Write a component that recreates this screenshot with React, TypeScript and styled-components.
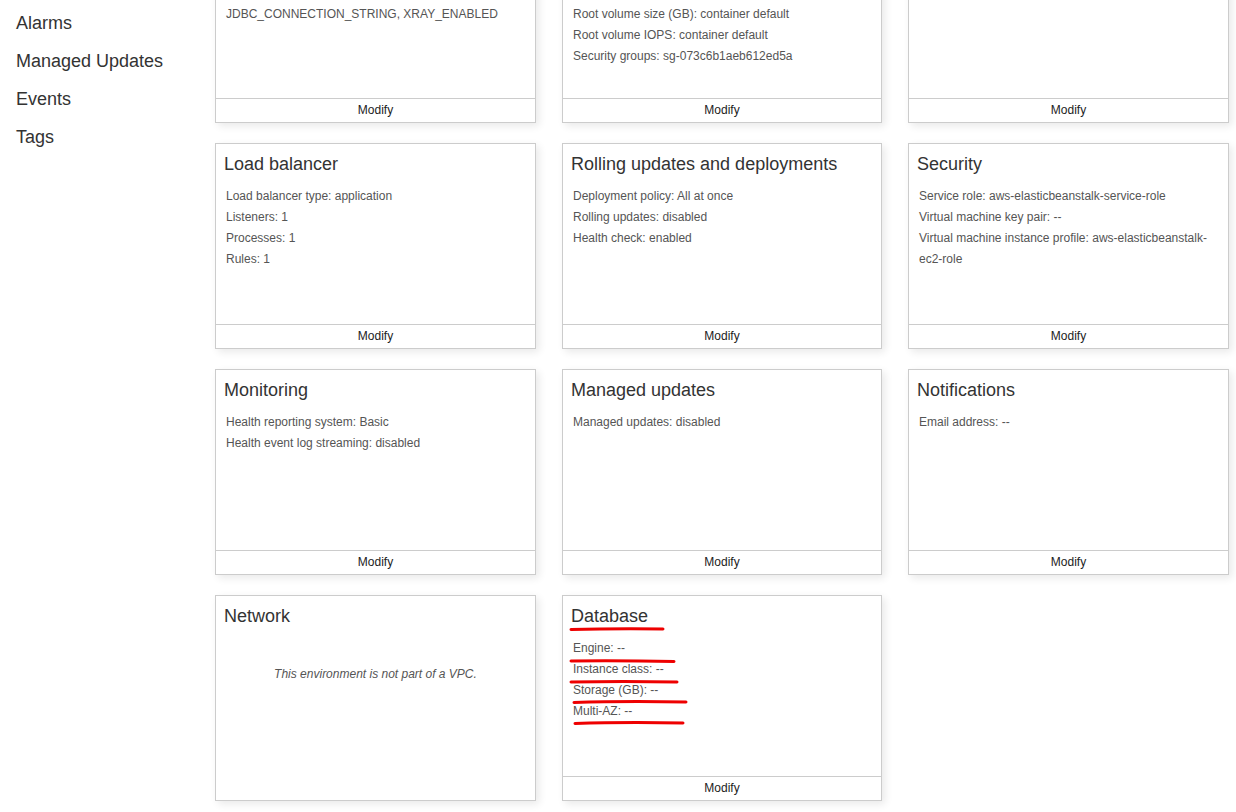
import React from "react";
import styled, { createGlobalStyle } from "styled-components";

const GlobalStyle = createGlobalStyle`
  html, body {
    margin: 0;
    padding: 0;
    background: #ffffff;
    font-family: "Liberation Sans", Arial, sans-serif;
    overflow: hidden;
  }
`;

const Page = styled.div`
  display: flex;
  align-items: flex-start;
  width: 1236px;
  height: 812px;
  overflow: hidden;
`;

const Sidebar = styled.nav`
  width: 215px;
  flex: none;
  padding-top: 4px;
  display: flex;
  flex-direction: column;
`;

const NavItem = styled.a`
  display: block;
  padding-left: 16px;
  height: 38px;
  line-height: 38px;
  font-size: 18px;
  color: #333333;
  text-decoration: none;
`;

/* the view is scrolled: the first row of cards starts above the viewport */
const Main = styled.main`
  margin-top: -83px;
  display: grid;
  grid-template-columns: 321px 320px 321px;
  grid-auto-rows: 206px;
  column-gap: 26px;
  row-gap: 20px;
`;

const Card = styled.section`
  position: relative;
  box-sizing: border-box;
  display: flex;
  flex-direction: column;
  border: 1px solid #cccccc;
  background: #ffffff;
  box-shadow: 3px 3px 8px rgba(0, 0, 0, 0.09);
`;

const CardBody = styled.div<{ $shift?: number }>`
  flex: 1;
  padding: ${(p) => 8 + (p.$shift ?? 0)}px 8px 0 8px;
  min-height: 0;
  overflow: hidden;
`;

const Title = styled.h3`
  margin: 0 0 10px 0;
  font-size: 18px;
  line-height: 24px;
  font-weight: normal;
  color: #333333;
`;

const ItemList = styled.ul`
  list-style: none;
  margin: 0;
  padding: 0 0 0 2px;
`;

const Item = styled.li`
  font-size: 12px;
  line-height: 21px;
  color: #555555;
`;

const Note = styled.p`
  margin: 38px 0 0 0;
  text-align: center;
  font-size: 12px;
  line-height: 16px;
  font-style: italic;
  color: #555555;
`;

const Footer = styled.div<{ $hidden?: boolean }>`
  flex: none;
  box-sizing: border-box;
  height: 24px;
  padding-bottom: 2px;
  border-top: 1px solid #cccccc;
  display: ${(p) => (p.$hidden ? "none" : "flex")};
  align-items: center;
  justify-content: center;
  font-size: 12px;
  color: #222222;
`;

const Marks = styled.svg`
  position: absolute;
  left: 0;
  top: 0;
  pointer-events: none;
`;

type CardData = {
  title: string;
  items?: string[];
  note?: string;
  noFooter?: boolean;
  marked?: boolean;
  shift?: number;
};

const cards: CardData[] = [
  {
    title: "Software",
    items: [
      "Log streaming: disabled",
      "Environment properties: AWS_REGION, DB_URL,",
      "JDBC_CONNECTION_STRING, XRAY_ENABLED",
    ],
    shift: 2,
  },
  {
    title: "Instances",
    items: [
      "Monitoring interval: 5 minute",
      "Root volume type: container default",
      "Root volume size (GB): container default",
      "Root volume IOPS: container default",
      "Security groups: sg-073c6b1aeb612ed5a",
    ],
    shift: 2,
  },
  {
    title: "Capacity",
    items: ["Environment type: load balanced", "Instances: 1 - 4"],
  },
  {
    title: "Load balancer",
    items: [
      "Load balancer type: application",
      "Listeners: 1",
      "Processes: 1",
      "Rules: 1",
    ],
  },
  {
    title: "Rolling updates and deployments",
    items: [
      "Deployment policy: All at once",
      "Rolling updates: disabled",
      "Health check: enabled",
    ],
  },
  {
    title: "Security",
    items: [
      "Service role: aws-elasticbeanstalk-service-role",
      "Virtual machine key pair: --",
      "Virtual machine instance profile: aws-elasticbeanstalk-ec2-role",
    ],
  },
  {
    title: "Monitoring",
    items: [
      "Health reporting system: Basic",
      "Health event log streaming: disabled",
    ],
  },
  { title: "Managed updates", items: ["Managed updates: disabled"] },
  { title: "Notifications", items: ["Email address: --"] },
  {
    title: "Network",
    note: "This environment is not part of a VPC.",
    noFooter: true,
  },
  {
    title: "Database",
    items: ["Engine: --", "Instance class: --", "Storage (GB): --", "Multi-AZ: --"],
    marked: true,
  },
];

const navItems = ["Alarms", "Managed Updates", "Events", "Tags"];

function RedMarks() {
  return (
    <Marks width="320" height="206" viewBox="0 0 320 206">
      <g stroke="#ee0000" strokeWidth="3" strokeLinecap="round" fill="none">
        <path d="M8 33.5 Q 50 32.5 100 33" />
        <path d="M8 65 Q 60 64.5 111 65.5" />
        <path d="M8 86 Q 60 85 114 86" />
        <path d="M11 106.5 Q 60 105 123 106" />
        <path d="M12 127.5 Q 60 126 120 127" />
      </g>
    </Marks>
  );
}

export default function App() {
  return (
    <>
      <GlobalStyle />
      <Page>
        <Sidebar>
          {navItems.map((n) => (
            <NavItem key={n}>{n}</NavItem>
          ))}
        </Sidebar>
        <Main>
          {cards.map((c) => (
            <Card key={c.title}>
              <CardBody $shift={c.shift}>
                <Title>{c.title}</Title>
                {c.items && (
                  <ItemList>
                    {c.items.map((it) => (
                      <Item key={it}>{it}</Item>
                    ))}
                  </ItemList>
                )}
                {c.note && <Note>{c.note}</Note>}
              </CardBody>
              <Footer $hidden={c.noFooter}>Modify</Footer>
              {c.marked && <RedMarks />}
            </Card>
          ))}
        </Main>
      </Page>
    </>
  );
}
